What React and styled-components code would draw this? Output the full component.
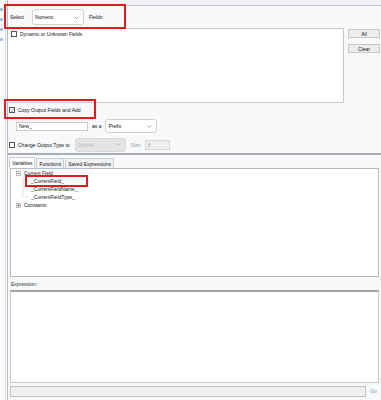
import React from "react";
import styled, { createGlobalStyle } from "styled-components";

const Global = createGlobalStyle`
  html, body { margin: 0; padding: 0; background: #f8f9fb; }
  body { font-family: "Liberation Sans", Arial, sans-serif; font-size: 5px; color: #141414; }
  * { box-sizing: border-box; }
`;

const Frame = styled.div`
  position: relative;
  width: 381px;
  height: 400px;
  display: flex;
  overflow: hidden;
  background: #f8f9fb;
`;

const LeftStrip = styled.div`
  width: 6px;
  flex: none;
  background: #fbfcfd;
  border-right: 1px solid #d9dce0;
  display: flex;
  flex-direction: column;
  gap: 7px;
  padding-top: 8px;
`;

const Dot = styled.div`
  width: 3px;
  height: 3px;
  border-radius: 50%;
  background: #8fb2dc;
`;

const Main = styled.div`
  flex: 1;
  margin-left: 1px;
  border-left: 1px solid #b9bcc0;
  display: flex;
  flex-direction: column;
`;

const TopStrip = styled.div`
  height: 6px;
  background: #f1f3f6;
  border-bottom: 1px solid #c3c6ca;
`;

const HeaderRow = styled.div`
  height: 22px;
  display: flex;
  align-items: center;
  padding-left: 2px;
`;

const Label = styled.span`
  color: ${(p) => (p.$muted ? "#9a9a9a" : "#141414")};
  margin-left: ${(p) => p.$ml || 0}px;
  white-space: nowrap;
`;

const Dropdown = styled.div`
  width: ${(p) => p.$w}px;
  height: ${(p) => p.$h}px;
  margin-left: ${(p) => p.$ml || 0}px;
  border: 1px solid ${(p) => (p.$disabled ? "#d8d8d8" : "#cfd2d6")};
  border-radius: 3px;
  background: ${(p) => (p.$disabled ? "#e4e4e4" : "#fff")};
  color: ${(p) => (p.$disabled ? "#b8b8b8" : "#141414")};
  display: flex;
  align-items: center;
  justify-content: space-between;
  padding: 0 4px 0 2px;
  flex: none;
`;

const Chevron = ({ color = "#777" }) => (
  <svg width="5" height="3" viewBox="0 0 5 3">
    <path d="M0.5 0.5 L2.5 2.5 L4.5 0.5" fill="none" stroke={color} strokeWidth="0.7" />
  </svg>
);

const FieldsRow = styled.div`
  display: flex;
  height: 75px;
`;

const FieldsBox = styled.div`
  width: 336px;
  height: 75px;
  background: #fff;
  border: 1px solid #c4c7cb;
  border-left: none;
  padding: 1px 0 0 3px;
`;

const ButtonCol = styled.div`
  display: flex;
  flex-direction: column;
  gap: 6px;
  padding: 1px 0 0 4px;
`;

const Button = styled.div`
  width: 32px;
  height: 9px;
  background: #ececec;
  border: 1px solid #c6c6c6;
  display: flex;
  align-items: center;
  justify-content: center;
  color: #141414;
`;

const CheckRow = styled.label`
  display: flex;
  align-items: center;
  gap: 3px;
  height: ${(p) => p.$h || 8}px;
`;

const Box = styled.span`
  width: 6px;
  height: 6px;
  border: 1px solid #555;
  background: #fff;
  display: inline-flex;
  align-items: center;
  justify-content: center;
  flex: none;
`;

const Check = () => (
  <svg width="5" height="5" viewBox="0 0 5 5">
    <path d="M0.8 2.6 L2 3.8 L4.2 1" fill="none" stroke="#333" strokeWidth="0.7" />
  </svg>
);

const CopyRow = styled.div`
  height: 14px;
  padding: 3px 0 0 1px;
`;

const PrefixRow = styled.div`
  display: flex;
  align-items: center;
  height: 18px;
  padding-left: 8px;
`;

const TextInput = styled.div`
  width: ${(p) => p.$w}px;
  height: ${(p) => p.$h || 9}px;
  margin-left: ${(p) => p.$ml || 0}px;
  background: ${(p) => (p.$disabled ? "#f0f0f0" : "#fff")};
  border: 1px solid ${(p) => (p.$disabled ? "#d6d6d6" : "#c9cbce")};
  color: ${(p) => (p.$disabled ? "#a8a8a8" : "#141414")};
  display: flex;
  align-items: center;
  padding-left: 2px;
  flex: none;
`;

const TypeRow = styled.div`
  display: flex;
  align-items: center;
  height: 15px;
  padding-left: 1px;
  margin-top: 2px;
`;

const Separator = styled.div`
  height: 2px;
  margin-top: 1px;
  background: #a9acb0;
`;

const Tabs = styled.div`
  display: flex;
  padding: 2px 0 0 1px;
  height: 13px;
`;

const Tab = styled.div`
  height: 11px;
  margin-top: ${(p) => (p.$active ? 0 : 1)}px;
  padding: 0 2px;
  display: flex;
  align-items: center;
  background: ${(p) => (p.$active ? "#fff" : "#f1f2f4")};
  border: 1px solid #c9ccd0;
  border-bottom: ${(p) => (p.$active ? "none" : "1px solid #c9ccd0")};
  margin-right: 1px;
  color: #141414;
`;

const TreePanel = styled.div`
  margin-left: 2px;
  width: 369px;
  height: 109px;
  background: #fff;
  border: 1px solid #b7babe;
  padding: 0 0 0 5px;
  display: flex;
  flex-direction: column;
`;

const TreeRow = styled.div`
  display: flex;
  align-items: center;
  height: 8px;
  padding-left: ${(p) => p.$indent || 0}px;
  gap: 3px;
`;

const Toggle = ({ open }) => (
  <svg width="5" height="5" viewBox="0 0 5 5">
    <rect x="0.5" y="0.5" width="4" height="4" fill="#fff" stroke="#9a9a9a" strokeWidth="0.6" />
    <path d="M1.3 2.5 H3.7" stroke="#333" strokeWidth="0.6" />
    {!open && <path d="M2.5 1.3 V3.7" stroke="#333" strokeWidth="0.6" />}
  </svg>
);

const Branch = ({ last }) => (
  <svg width="6" height="8" viewBox="0 0 6 8">
    <path d={last ? "M1 0 V4 H6" : "M1 0 V8 M1 4 H6"} stroke="#a8a8a8" strokeWidth="0.6" strokeDasharray="0.8 0.8" fill="none" />
  </svg>
);

const ExprLabel = styled.div`
  height: 13px;
  padding: 4px 0 0 3px;
  color: #333;
`;

const ExprBox = styled.div`
  margin-left: 2px;
  width: 369px;
  height: 93px;
  background: #fff;
  border: 1px solid #c8cbce;
  border-top: 2px solid #9fa2a6;
`;

const BottomRow = styled.div`
  display: flex;
  align-items: center;
  height: 14px;
  padding: 2px 0 0 2px;
  gap: 4px;
`;

const StatusBar = styled.div`
  width: 356px;
  height: 11px;
  background: #efefef;
  border: 1px solid #bfc2c5;
`;

const GoLink = styled.span`
  color: #6f93c4;
`;

const Highlight = styled.div`
  position: absolute;
  left: ${(p) => p.$x}px;
  top: ${(p) => p.$y}px;
  width: ${(p) => p.$w}px;
  height: ${(p) => p.$h}px;
  border: 2px solid #e01b1b;
  pointer-events: none;
`;

export default function App() {
  return (
    <>
      <Global />
      <Frame>
        <LeftStrip>
          <Dot />
          <Dot />
          <Dot />
          <Dot />
        </LeftStrip>
        <Main>
          <TopStrip />
          <HeaderRow>
            <Label>Select</Label>
            <Dropdown $w={52} $h={16} $ml={8}>
              <span>Numeric</span>
              <Chevron />
            </Dropdown>
            <Label $ml={5}>Fields:</Label>
          </HeaderRow>
          <FieldsRow>
            <FieldsBox>
              <CheckRow>
                <Box />
                <span>Dynamic or Unknown Fields</span>
              </CheckRow>
            </FieldsBox>
            <ButtonCol>
              <Button>All</Button>
              <Button>Clear</Button>
            </ButtonCol>
          </FieldsRow>
          <CopyRow>
            <CheckRow>
              <Box>
                <Check />
              </Box>
              <span>Copy Output Fields and Add</span>
            </CheckRow>
          </CopyRow>
          <PrefixRow>
            <TextInput $w={72}>New_</TextInput>
            <Label $ml={4}>as a</Label>
            <Dropdown $w={52} $h={14} $ml={4}>
              <span>Prefix</span>
              <Chevron />
            </Dropdown>
          </PrefixRow>
          <TypeRow>
            <CheckRow>
              <Box />
              <span>Change Output Type to</span>
            </CheckRow>
            <Dropdown $w={51} $h={14} $ml={5} $disabled>
              <span>Double</span>
              <Chevron color="#aaa" />
            </Dropdown>
            <Label $ml={5} $muted>
              Size:
            </Label>
            <TextInput $w={25} $h={10} $ml={3} $disabled>
              8
            </TextInput>
          </TypeRow>
          <Separator />
          <Tabs>
            <Tab $active>Variables</Tab>
            <Tab>Functions</Tab>
            <Tab>Saved Expressions</Tab>
          </Tabs>
          <TreePanel>
            <TreeRow>
              <Toggle open />
              <span>Current Field</span>
            </TreeRow>
            <TreeRow $indent={6}>
              <Branch />
              <span>_CurrentField_</span>
            </TreeRow>
            <TreeRow $indent={6}>
              <Branch />
              <span>_CurrentFieldName_</span>
            </TreeRow>
            <TreeRow $indent={6}>
              <Branch last />
              <span>_CurrentFieldType_</span>
            </TreeRow>
            <TreeRow>
              <Toggle />
              <span>Constants</span>
            </TreeRow>
          </TreePanel>
          <ExprLabel>Expression:</ExprLabel>
          <ExprBox />
          <BottomRow>
            <StatusBar />
            <GoLink>Go</GoLink>
          </BottomRow>
        </Main>
        <Highlight $x={4} $y={4} $w={122} $h={25} />
        <Highlight $x={4} $y={99} $w={92} $h={20} />
        <Highlight $x={25} $y={175} $w={63} $h={12} />
      </Frame>
    </>
  );
}
